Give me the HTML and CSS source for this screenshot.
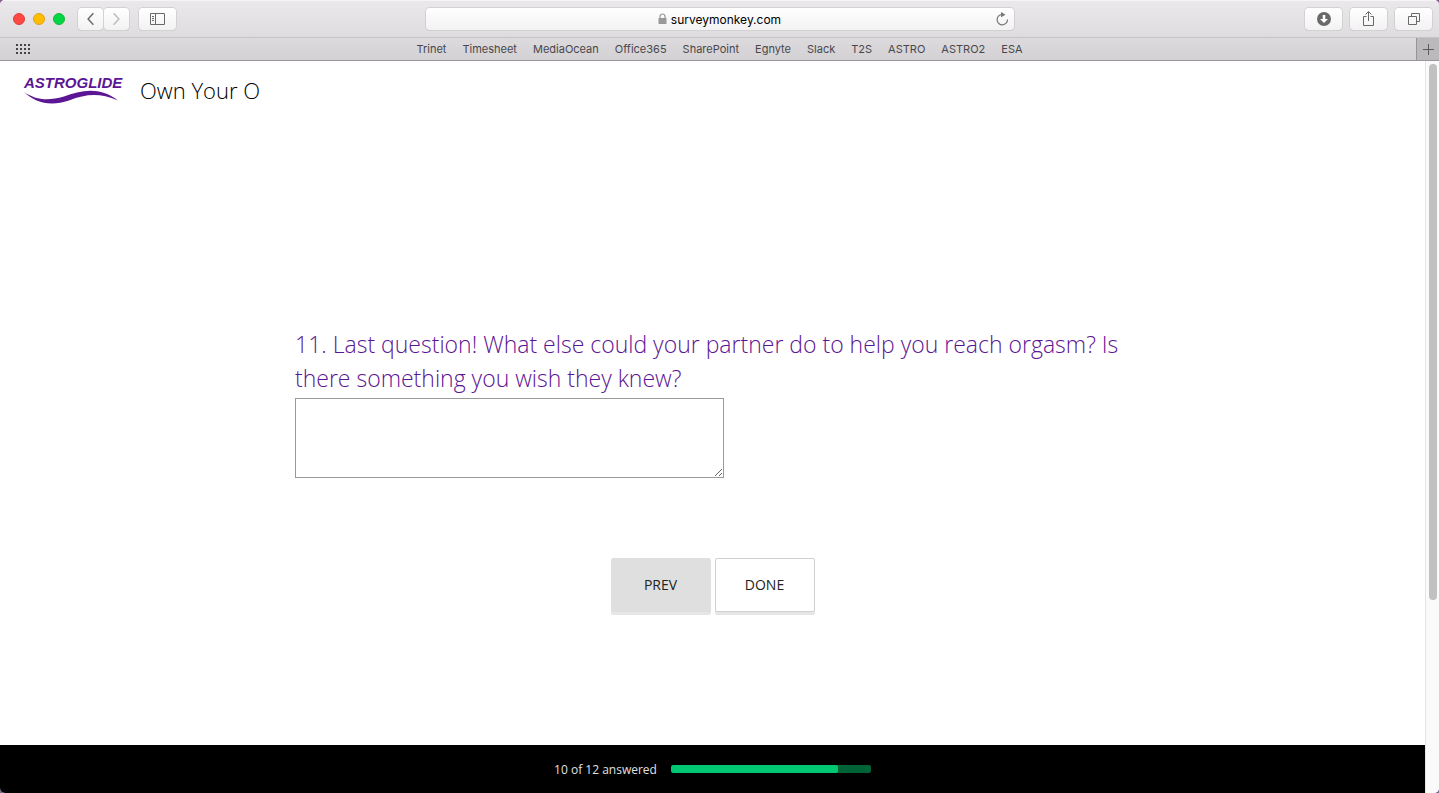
FILE: index.html
```html
<!DOCTYPE html>
<html lang="en">
<head>
<meta charset="utf-8">
<title>Own Your O</title>
<link rel="stylesheet" href="styles.css">
</head>
<body>
<div class="window">
  <header class="toolbar">
    <div class="toolbar-side">
      <div class="lights"><span class="light light-close"></span><span class="light light-min"></span><span class="light light-max"></span></div>
      <div class="nav-group">
        <button class="tool tool-nav" aria-label="Back"><svg width="26" height="22" viewBox="0 0 26 22"><path d="M16 5 10.500 11 16 17" fill="none" stroke="#6a686a" stroke-width="1.500"/></svg></button>
        <button class="tool tool-nav" aria-label="Forward"><svg width="26" height="22" viewBox="0 0 26 22"><path d="M10 5 15.500 11 10 17" fill="none" stroke="#bdbbbd" stroke-width="1.500"/></svg></button>
      </div>
      <button class="tool" aria-label="Show sidebar"><svg width="37" height="22" viewBox="0 0 37 22"><path d="M11.500 5.500h14v11h-14zM16.500 5.500v11M13 8.500h2M13 10.500h2M13 12.500h2" fill="none" stroke="#6a686a"/></svg></button>
    </div>
    <div class="address">
      <svg class="lock" width="9" height="12" viewBox="0 0 9 12"><path d="M2 6V3.500a2.500 2.500 0 0 1 5 0V6" fill="none" stroke="#999" stroke-width="1.200"/><rect x="0.500" y="5" width="8" height="6" rx="0.500" fill="#999"/></svg>
      <span>surveymonkey.com</span>
      <button class="reload" aria-label="Reload"><svg width="14" height="14" viewBox="0 0 14 14"><path d="M7 2.500A5.200 5.200 0 1 0 12.500 7.500" fill="none" stroke="#777" stroke-width="1.200"/><path d="M6 0 10.500 2.700 6 5.200z" fill="#777"/></svg></button>
    </div>
    <div class="toolbar-side toolbar-end">
      <button class="tool" aria-label="Downloads"><svg width="37" height="22" viewBox="0 0 37 22"><circle cx="19" cy="11" r="7" fill="#6a686a"/><path d="M17.700 7h2.600v4h2.700L19 15l-4-4h2.700z" fill="#fff"/></svg></button>
      <button class="tool" aria-label="Share"><svg width="37" height="22" viewBox="0 0 37 22"><path d="M16.500 8.500h-3v9h10v-9h-3M18.500 13V4M15.500 6.500l3-3 3 3" fill="none" stroke="#6a686a"/></svg></button>
      <button class="tool" aria-label="Show all tabs"><svg width="37" height="22" viewBox="0 0 37 22"><path d="M13.500 8.500h8v8h-8zM16.500 8V5.500h8v8H22" fill="none" stroke="#6a686a"/></svg></button>
    </div>
  </header>
  <nav class="bookmarks" aria-label="Bookmarks">
    <button class="grid-button" aria-label="Top sites"><svg width="16" height="12" viewBox="0 0 16 12"><path d="M1 2h14M1 6h14M1 10h14" fill="none" stroke="#444" stroke-width="2" stroke-dasharray="2 2"/></svg></button>
    <div class="links">
      <a href="#">Trinet</a><a href="#">Timesheet</a><a href="#">MediaOcean</a><a href="#">Office365</a><a href="#">SharePoint</a><a href="#">Egnyte</a><a href="#">Slack</a><a href="#">T2S</a><a href="#">ASTRO</a><a href="#">ASTRO2</a><a href="#">ESA</a>
    </div>
    <button class="new-tab" aria-label="New tab"><svg width="11" height="11" viewBox="0 0 11 11"><path d="M0 5.500h11M5.500 0v11" stroke="#5c5a5c"/></svg></button>
  </nav>
  <div class="viewport">
    <div class="page">
      <header class="survey-header">
        <svg class="logo" width="102" height="40" viewBox="0 -4 102 40" role="img" aria-label="Astroglide">
          <text x="1" y="14" class="logo-text">ASTROGLIDE</text>
          <path d="M1 18C12 25.500 24 27.500 41 22.500C58 16 77 12 95 26.500C77 19 64 19.500 46 26.500C27 33 12 28.500 1 18z" fill="#5c1594"/>
        </svg>
        <h1>Own Your O</h1>
      </header>
      <main class="survey-main">
        <form class="question">
          <label for="answer">11. Last question! What else could your partner do to help you reach orgasm? Is there something you wish they knew?</label>
          <textarea id="answer"></textarea>
          <div class="actions">
            <button type="button" class="action action-prev">PREV</button>
            <button type="button" class="action action-done">DONE</button>
          </div>
        </form>
      </main>
      <footer class="progress">
        <span>10 of 12 answered</span>
        <div class="track"><div class="fill" style="width:83.500%"></div></div>
      </footer>
    </div>
    <div class="scrollbar"><div class="thumb"></div></div>
  </div>
</div>
</body>
</html>
```
FILE: styles.css
```css
* { box-sizing: border-box; }
body { margin: 0; background: #82628c; }
button { padding: 0; border: 0; background: none; }
svg { display: block; }
.window {
  display: flex;
  flex-direction: column;
  min-height: 100vh;
  border-radius: 5px;
  overflow: hidden;
  background: #fff;
  font-family: Inter, "Liberation Sans", sans-serif;
}
.toolbar {
  display: grid;
  grid-template-columns: 1fr minmax(0, 588px) 1fr;
  height: 38px;
  align-items: center;
  padding: 0 7px;
  border-top: 1px solid #f6f4f6;
  border-bottom: 1px solid #c5c3c6;
  background: linear-gradient(#ebe8eb, #dfdce0);
}
.toolbar-side { display: flex; align-items: center; gap: 8px; }
.toolbar-end { justify-content: flex-end; }
.lights { display: flex; gap: 8px; margin: 0 5px 0 6px; }
.light { width: 12px; height: 12px; border-radius: 50%; border: 1px solid; }
.light-close { background: #ff4743; border-color: #e33e3a; }
.light-min { background: #ffbd00; border-color: #dfa023; }
.light-max { background: #00d742; border-color: #1bb33a; }
.nav-group { display: flex; gap: 1px; margin-right: 2px; }
.tool, .address {
  height: 22px;
  border-radius: 4px;
  background: linear-gradient(#fff, #f3f2f3);
  box-shadow: 0 0 0 1px #d3d1d4, 0 1px 0 0 #bebcc0;
}
.tool { width: 37px; display: flex; justify-content: center; }
.tool-nav { width: 25px; }
.address {
  position: relative;
  display: flex;
  align-items: center;
  justify-content: center;
  gap: 4px;
  font-size: 12px;
  color: #000;
}
.reload { position: absolute; right: 5px; top: 4px; }
.bookmarks {
  display: grid;
  grid-template-columns: 23px 1fr 23px;
  height: 23px;
  align-items: center;
  border-bottom: 1px solid #999799;
  background: linear-gradient(#dcdadd, #d3d1d4);
}
.grid-button { justify-self: end; margin-right: -8px; }
.links {
  display: flex;
  justify-content: center;
  gap: 16px;
  font-size: 11px;
  line-height: 22px;
  white-space: nowrap;
}
.links a { color: #49474a; text-decoration: none; }
.new-tab {
  display: grid;
  place-items: center;
  height: 22px;
  border-left: 1px solid #979597;
  background: #bbb9bc;
}
.viewport { flex: 1; display: flex; }
.page {
  flex: 1;
  display: flex;
  flex-direction: column;
  font-family: "Open Sans", "Noto Sans", sans-serif;
}
.survey-header {
  display: flex;
  align-items: center;
  gap: 15px;
  height: 58px;
  padding: 0 23px;
}
.logo-text {
  font: italic 700 15px "Liberation Sans", Arial, sans-serif;
  fill: #5c1594;
}
h1 { margin: 0; font-size: 22px; font-weight: 300; line-height: 32px; color: #000; }
.survey-main {
  flex: 1;
  display: flex;
  align-items: center;
  justify-content: center;
  padding: 78px 24px 0;
}
.question { display: flex; flex-direction: column; width: 100%; max-width: 835px; }
.question label { font-size: 23px; font-weight: 300; line-height: 34px; color: #5c1594; }
textarea {
  width: 429px;
  max-width: 100%;
  height: 80px;
  margin-top: 3px;
  border: 1px solid #999;
  background: #fff;
  font: inherit;
}
.actions { display: flex; justify-content: center; gap: 4px; margin: 80px 0 3px; }
.action {
  width: 100px;
  height: 54px;
  padding-bottom: 2px;
  border: 1px solid #d0d0d0;
  border-radius: 2px;
  background: #fff;
  box-shadow: 0 3px 0 #e6e6e6;
  font: 14px "Open Sans", sans-serif;
  color: #222;
}
.action-prev { background: #dfdfdf; border-color: #dfdfdf; }
.progress {
  display: flex;
  align-items: center;
  justify-content: center;
  gap: 14px;
  height: 48px;
  background: #000;
  font-size: 12px;
  color: #e0e0e0;
}
.track { width: 200px; height: 8px; border-radius: 2px; overflow: hidden; background: #006237; }
.fill { height: 100%; border-radius: 2px; background: #00c772; }
.scrollbar {
  width: 14px;
  padding: 3px 2px 0 3px;
  border-left: 1px solid #e5e5e5;
  background: #fafafa;
}
.thumb { width: 8px; height: 73.500%; border-radius: 4px; background: #c1c1c1; }
```
